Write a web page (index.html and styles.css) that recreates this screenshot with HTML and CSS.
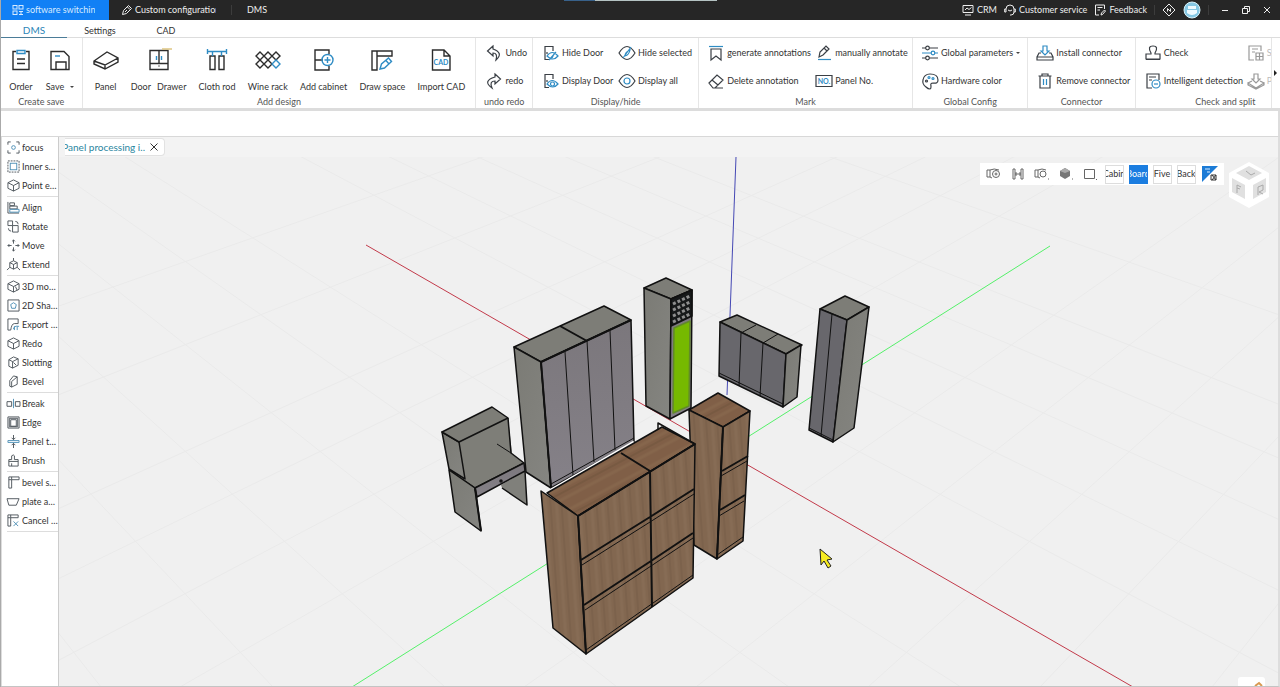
FILE: index.html
```html
<!DOCTYPE html>
<html lang="en">
<head>
<meta charset="utf-8">
<title>DMS</title>
<link rel="stylesheet" href="styles.css">
</head>
<body>
<div class="app">
<header class="titlebar">
  <div class="progress"></div>
  <button class="wtab wtab-active"><svg class="ic12" viewBox="0 0 12 12"><rect x="1" y="1.500" width="4" height="3.500"/><rect x="7" y="1.500" width="4" height="3.500"/><rect x="1" y="7" width="4" height="3.500"/><path d="M7 7.500h4M7 10.500h4M9 7v4"/></svg><span class="clip">software switching</span></button>
  <button class="wtab wtab-custom"><svg class="ic12" viewBox="0 0 12 12"><path d="M1.500 10.500l1-4 5-5 3 3-5 5zM6.500 3l2.500 2.500M4 8l2-2"/></svg><span class="clip">Custom configuration</span></button>
  <i class="tsep"></i>
  <button class="wtab wtab-dms">DMS</button>
  <div class="tools">
    <button><svg class="ic12" viewBox="0 0 12 12"><path d="M1 1.500h10v7H1zM3 11h6M3 6l2-2 2 1.500L9.500 3.500"/></svg>CRM</button>
    <button><svg class="ic12" viewBox="0 0 12 12"><path d="M2 8V5a4 4 0 0 1 8 0v3a3 3 0 0 1-3 3H6M2 5H.700v3H2M10 5h1.300v3H10M4 6q2 2 4 0"/></svg>Customer service</button>
    <button><svg class="ic12" viewBox="0 0 12 12"><path d="M10.500 5V1h-9v10H5M3.500 3.500h5M3.500 6H6M7 11l.500-2 3-3 1 1-3 3.500z"/></svg>Feedback</button>
    <i class="tsep"></i>
    <button aria-label="Assistant"><svg class="ic14" viewBox="0 0 14 14"><path d="M7 1l6 6-6 6-6-6zM5.500 8.500v-3l3 3v-3"/></svg></button>
    <button aria-label="Account"><svg class="avatar" viewBox="0 0 18 18"><circle cx="9" cy="9" r="8" fill="#86c8e4" stroke="#d9f2fa"/><path d="M5 5h8v3H5zM4 9h10v3q-5 4-10 0z" fill="#eefaff" stroke="none"/></svg></button>
    <i class="tsep"></i>
    <button class="win" aria-label="Minimize"><svg class="ic10" viewBox="0 0 10 10"><path d="M2 5.500h6"/></svg></button>
    <button class="win" aria-label="Restore"><svg class="ic10" viewBox="0 0 10 10"><path d="M1.500 3.500h5v5h-5zM3.500 3.500v-2h5v5h-2"/></svg></button>
    <button class="win" aria-label="Close"><svg class="ic10" viewBox="0 0 10 10"><path d="M2 2l6 6M8 2L2 8"/></svg></button>
  </div>
</header>
<nav class="menu">
  <button class="on">DMS</button><button>Settings</button><button>CAD</button>
</nav>
<section class="ribbon">
  <div class="group g-save">
    <div class="bigs">
      <button class="big"><svg viewBox="0 0 24 24"><path d="M7 3.500H4v18h16v-18h-3M8 11h8M8 15.500h8"/><path class="b" d="M8 2.500h8v3H8z"/></svg>Order</button>
      <button class="big"><svg viewBox="0 0 24 24"><path d="M3 3.500h13l5 5v13H3zM8 21v-7h10v7"/><path class="b" d="M7 8h5"/></svg><span>Save <i class="caret"></i></span></button>
    </div>
    <h2>Create save</h2>
  </div>
  <div class="group g-design">
    <div class="bigs">
      <button class="big"><svg class="wide" viewBox="0 0 26 24"><path d="M1 13L14 4l11 6v4l-13 7L1 16zM1 13l11 4 13-7M12 17v4"/></svg>Panel</button>
      <button class="big"><svg viewBox="0 0 24 24"><path d="M3 2.500h18v19H3zM12 3v13M3 15.500h18M12 17.500v1"/><path class="b" d="M9.500 8v4M14.500 8v4"/><path class="o" d="M15 1h10"/></svg><span class="two"><span>Door</span><span>Drawer</span></span></button>
      <button class="big"><svg viewBox="0 0 24 24"><path d="M5 8h5v13.500H5zM14 8h5v13.500h-5z"/><path class="b" d="M2.500 1v5M21.500 1v5M3 3.500h18M7.500 4v4M16.500 4v4"/></svg>Cloth rod</button>
      <button class="big"><svg class="wide" viewBox="0 0 26 24"><path d="M5 4l4 4-4 4-4-4zM13 4l4 4-4 4-4-4zM21 4l4 4-4 4-4-4zM5 12l4 4-4 4-4-4zM13 12l4 4-4 4-4-4z"/><path class="b" d="M21 12l4 4-4 4-4-4z"/></svg>Wine rack</button>
      <button class="big"><svg viewBox="0 0 24 24"><path d="M17 6V2H3v20h14v-4M3 12h8"/><circle class="b" cx="15.500" cy="12" r="5.500"/><path class="b" d="M12.500 12h6M15.500 9v6"/></svg>Add cabinet</button>
      <button class="big"><svg viewBox="0 0 24 24"><path d="M2 3h20v5H7v14H2zM7 3v5"/><path class="b" d="M10 21l1.500-5 7-6 3 3.500-7 6.500zM16 12.500l3 3.500"/></svg>Draw space</button>
      <button class="big"><svg viewBox="0 0 24 24"><path d="M3.500 2H15l6 6v14H3.500zM15 2v6h6"/><text x="12" y="17">CAD</text></svg>Import CAD</button>
    </div>
    <h2>Add design</h2>
  </div>
  <div class="group g-undo">
    <div class="smalls">
      <button class="small"><svg viewBox="0 0 18 18"><path d="M8 2L2.500 7 8 12V9q5 0 3 7 8-7-3-11z"/></svg>Undo</button>
      <button class="small"><svg viewBox="0 0 18 18"><path d="M10 2l5.500 5L10 12V9Q4 9 7 16-3 9 10 5z"/></svg>redo</button>
    </div>
    <h2>undo redo</h2>
  </div>
  <div class="group g-display">
    <div class="smalls">
      <button class="small"><svg viewBox="0 0 18 18"><path d="M7 15.500H3v-13h8V7M5 8v2"/><path class="b" d="M5 12q5-7 11 0-5 6-11 0zM7 16l7-8M10 14l2-4"/></svg>Hide Door</button>
      <button class="small"><svg viewBox="0 0 18 18"><path d="M7 15.500H3v-13h8V7M5 8v2"/><path class="b" d="M5 12q5-7 11 0-5 6-11 0z"/><circle class="b" cx="10.500" cy="12" r="2"/></svg>Display Door</button>
      <button class="small"><svg viewBox="0 0 18 18"><path d="M1 9q8-13 16 0-8 13-16 0z"/><path class="b" d="M5 14l8-11M7 12q4-1 5-6-5 2-5 6"/></svg>Hide selected</button>
      <button class="small"><svg viewBox="0 0 18 18"><path d="M1 9q8-13 16 0-8 13-16 0z"/><circle class="b" cx="9" cy="9" r="3"/></svg>Display all</button>
    </div>
    <h2>Display/hide</h2>
  </div>
  <div class="group g-mark">
    <div class="smalls">
      <button class="small"><svg viewBox="0 0 18 18"><path d="M4 5h10v11l-5-4-5 4z"/><path class="b" d="M2 2.500h14"/></svg>generate annotations</button>
      <button class="small"><svg viewBox="0 0 18 18"><path d="M2 11l8-8 6 5-8 8H6zM5 8l6 5M6 16h10"/></svg>Delete annotation</button>
      <button class="small"><svg viewBox="0 0 18 18"><path d="M4 13l1-5 6-6 3 3-6 6zM9 4l3 3"/><path class="b" d="M3 15.500h13"/></svg>manually annotate</button>
      <button class="small"><svg viewBox="0 0 18 18"><path d="M1 3.500h16v11H1z"/><text x="9" y="12">NO.</text></svg>Panel No.</button>
    </div>
    <h2>Mark</h2>
  </div>
  <div class="group g-global">
    <div class="smalls">
      <button class="small"><svg viewBox="0 0 18 18"><path d="M1 4h4M8 4h9M1 14h4M8 14h9"/><circle cx="6.500" cy="4" r="1.800"/><circle cx="6.500" cy="14" r="1.800"/><circle class="b" cx="12" cy="9" r="1.800"/><path class="b" d="M1 9h9M14 9h3"/></svg><span>Global parameters<i class="caret"></i></span></button>
      <button class="small"><svg viewBox="0 0 18 18"><path d="M9 17q-2 0-4-2-4-3-3-7 1-6 7-6 8 0 8 6 0 4-5 3-3 0-2 3 0 3-1 3z"/><circle cx="5.500" cy="9" r="1"/><circle class="b" cx="8" cy="5.500" r="1"/><circle class="b" cx="12" cy="6.500" r="1"/></svg>Hardware color</button>
    </div>
    <h2>Global Config</h2>
  </div>
  <div class="group g-conn">
    <div class="smalls">
      <button class="small"><svg viewBox="0 0 18 18"><path d="M5 9H3l-2 4v3h16v-3l-2-4h-2M1 13h16"/><path class="b" d="M7 2v5H5l4 4 4-4h-2V2z"/></svg>Install connector</button>
      <button class="small"><svg viewBox="0 0 18 18"><path d="M2.500 4h13M6 4V2h6v2M4 4v12h10V4"/><path class="b" d="M7.500 7v6M10.500 7v6"/></svg>Remove connector</button>
    </div>
    <h2>Connector</h2>
  </div>
  <div class="group g-check">
    <div class="smalls">
      <button class="small"><svg viewBox="0 0 18 18"><path d="M7 9Q3 2 9 2t2 7v1h5v5H2v-5h5zM2 15.500h14"/></svg>Check</button>
      <button class="small"><svg viewBox="0 0 18 18"><path d="M15 8V2H3v14h5M5 5h7M5 8h3"/><circle class="b" cx="12" cy="12" r="4"/><path class="b" d="M10 12h4"/></svg>Intelligent detection</button>
      <button class="small off" disabled><svg viewBox="0 0 18 18"><path d="M14 7V2H2v14h5M5 5h6M5 8h3M9 9h7v7H9zM12.500 9v7M9 12.500h7"/></svg>Split</button>
      <button class="small off" disabled><svg viewBox="0 0 18 18"><path d="M7 2h4v5h2l-4 4-4-4h2zM5 9l-4 2 8 5 8-5-4-2M1 11v2l8 4 8-4v-2"/></svg>Preview</button>
    </div>
    <h2>Check and split</h2>
  </div>
  <button class="more" aria-label="More tools"><svg viewBox="0 0 4 6"><path d="M1 0l3 3-3 3z"/></svg></button>
</section>
<div class="optionbar"></div>
<main class="work">
  <aside class="side">
    <div class="sgroup">
      <button><svg viewBox="0 0 14 14"><path d="M1 4V1h3M10 1h3v3M13 10v3h-3M4 13H1v-3"/><circle class="b" cx="7" cy="7" r="2"/></svg><span>focus</span></button>
      <button><svg viewBox="0 0 14 14"><rect x="1" y="1" width="12" height="12" stroke-dasharray="2 1"/><rect class="b" x="3.500" y="3.500" width="7" height="7"/></svg><span>Inner space</span></button>
      <button><svg viewBox="0 0 14 14"><path d="M7 1l6 3v6l-6 3-6-3V4zM1 4l6 3 6-3M7 7v6"/></svg><span>Point edit</span></button>
    </div>
    <div class="sgroup">
      <button><svg viewBox="0 0 14 14"><path d="M1 1v12M1 13h12M3 2h5v3H3zM3 5.500h8v3H3z"/><path class="b" d="M3 9h10v3H3z"/></svg><span>Align</span></button>
      <button><svg viewBox="0 0 14 14"><path d="M1 1h5v5H1zM6 6h6v7H6zM9 1.500q3 0 3 3M1.500 9q0 3 3 3"/></svg><span>Rotate</span></button>
      <button><svg viewBox="0 0 14 14"><path d="M7 5V1M5.500 2.500L7 1l1.500 1.500M7 9v4M5.500 11.500L7 13l1.500-1.500M5 7H1M2.500 5.500L1 7l1.500 1.500M9 7h4M11.500 5.500L13 7l-1.500 1.500"/></svg><span>Move</span></button>
      <button><svg viewBox="0 0 14 14"><path d="M7 3l4 2v5l-4 2-4-2V5zM3 5l4 2 4-2M7 7v5M7 3V0M3 10l-3 3M11 10l3 3"/></svg><span>Extend</span></button>
    </div>
    <div class="sgroup">
      <button><svg viewBox="0 0 14 14"><path d="M7 1l6 3v6l-6 3-6-3V4zM1 4l6 3 6-3M7 7v6M9 7l2 4"/></svg><span>3D model</span></button>
      <button><svg viewBox="0 0 14 14"><path d="M1 1h12v12H1z"/><path class="b" d="M7 4l3 2-1 4H5L4 6z"/></svg><span>2D Shape</span></button>
      <button><svg viewBox="0 0 14 14"><path d="M4 13H1V1h11v5H8q-3 0-4 7"/><path class="b" d="M7 12q0-4 6-3M8 9v4M11 9v4"/></svg><span>Export file</span></button>
      <button><svg viewBox="0 0 14 14"><path d="M7 1l6 3v6l-6 3-6-3V4zM1 4l6 3 6-3M7 7v6"/></svg><span>Redo</span></button>
      <button><svg viewBox="0 0 14 14"><path d="M2 4l5-3 5 2v7l-6 3-4-2zM2 4l4 2v7M6 6l6-3M7 7l3 3"/></svg><span>Slotting</span></button>
      <button><svg viewBox="0 0 14 14"><path d="M3 6l4-5 4 1v8l-6 3-2-1zM5 7v6M5 7l6-5"/></svg><span>Bevel</span></button>
    </div>
    <div class="sgroup">
      <button><svg viewBox="0 0 14 14"><path d="M0 5h5v5H0zM9 5h5v5H9z"/><path class="b" d="M7 2v10"/></svg><span>Break</span></button>
      <button><svg viewBox="0 0 14 14"><path d="M1 1h12v12H1zM2.500 2.500h9v9h-9zM4 4h6v7H4z"/></svg><span>Edge</span></button>
      <button><svg viewBox="0 0 14 14"><path d="M7 0v5M5 3l2 2 2-2M7 14V9M5 11l2-2 2 2"/><path class="b" d="M1 6h12v2H1z"/></svg><span>Panel tool</span></button>
      <button><svg viewBox="0 0 14 14"><path d="M5 6V2q2-2 3 0v4h4v7H2V6zM2 8h10M5 10v3"/></svg><span>Brush</span></button>
    </div>
    <div class="sgroup">
      <button><svg viewBox="0 0 14 14"><path d="M2 1h11v3H5v9H2zM2 4h3M5 1v3"/></svg><span>bevel side</span></button>
      <button><svg viewBox="0 0 14 14"><path d="M0 4h13l-3 7H2z"/></svg><span>plate angle</span></button>
      <button><svg viewBox="0 0 14 14"><path d="M1 1h11v3H4v9H1zM1 4h3M4 1v3"/><path class="b" d="M7 8l5 5M12 8l-5 5"/></svg><span>Cancel cut</span></button>
    </div>
  </aside>
  <div class="doc">
    <div class="doctabs"><div class="doctab"><span class="doctitle"><span>Panel processing i..</span></span><button aria-label="Close tab"><svg class="ic10" viewBox="0 0 10 10"><path d="M1.500 1.500l7 7M8.500 1.500l-7 7"/></svg></button></div></div>
    <div class="view">
      <svg class="scene" viewBox="59 157 1219 529" preserveAspectRatio="xMidYMid slice" role="img" aria-label="Cabinet layout">
        <defs>
          <pattern id="wood" width="23" height="2000" patternUnits="userSpaceOnUse" patternTransform="rotate(-4)"><rect width="23" height="2000" fill="#826750" stroke="none"/><path d="M3 0v2000M14 0v2000" stroke="#876c55" stroke-width="3"/><path d="M8 0v2000M19 0v2000" stroke="#7c624c" stroke-width="2"/></pattern>
          <pattern id="woodtop" width="23" height="2000" patternUnits="userSpaceOnUse" patternTransform="rotate(62) translate(0 -1000)"><rect width="23" height="2000" fill="#805f47" stroke="none"/><path d="M4 0v2000M15 0v2000" stroke="#86664c" stroke-width="3"/><path d="M9 0v2000" stroke="#785a42" stroke-width="2"/></pattern>
          <linearGradient id="gside" x2="1" y2="1"><stop stop-color="#7b7b75"/><stop offset="1" stop-color="#858581"/></linearGradient>
          <linearGradient id="gfront" x2="0" y2="1"><stop stop-color="#7b777c"/><stop offset="1" stop-color="#858188"/></linearGradient>
        </defs>
        <path class="grid" d="M-753-400L-415 687M-753-400L-243 687M-753-400L-71 687M-753-400L101 687M-753-400L273 687M-753-400L445 687M-753-400L617 687M-753-400L789 687M-753-400L961 687M-753-400L1305 687M-753-400L1477 687M-753-400L1649 687M-753-400L1821 687M-753-400L1993 687M-753-400L2337 687M2080-405L-1024 687M2080-405L-680 687M2080-405L-336 687M2080-405L-164 687M2080-405L8 687M2080-405L180 687M2080-405L524 687M2080-405L696 687M2080-405L868 687M2080-405L1040 687M2080-405L1212 687M2080-405L1384 687M2080-405L1556 687"/>
        <path d="M366 245L1133 687" stroke="#c23a4a"/><path d="M352 687L1050 246" stroke="#55f06a"/><path d="M736 157L727 395" stroke="#4548b4"/>
        <g class="solid">
          <path class="top" d="M644 288l22-10 26 12-21 9z"/><path class="sd" d="M644 288l27 11-1 120-24-13z"/><path class="fr" d="M671 299l21-9-1 118-21 11z"/>
          <path d="M671 299l21-9v26l-21 10z" fill="#17191a"/>
          <path d="M673 304l17-8M673 310l17-8M673 316l17-8M673 322l17-8" stroke="#8f8f8f" stroke-width="3" stroke-dasharray="3 2"/>
          <path d="M674 328l16-7-1 85-16 7z" fill="#76b900" stroke="#628a29"/>
        </g>
        <g class="solid">
          <path class="top" d="M720 322l17-7 65 30-16 9z"/><path class="dark" d="M720 322l66 32-3 53-64-31z"/><path class="sd" d="M786 354l15-9-4 52-14 10z"/><path d="M741 333l-2 53M763 343l-3 53M741 333l15-8M763 343l15-9M719 373l64 31" class="thin"/>
        </g>
        <g class="solid">
          <path class="top" d="M820 309l25-13 24 11-22 13z"/><path class="dark" d="M820 309l27 11-14 122-24-12z"/><path class="sd" d="M847 320l22-13-15 121-21 14z"/><path class="thin" d="M832 314l-11 122M809 428l24 12"/>
        </g>
        <g class="solid">
          <path class="top" d="M514 347l90-41 27 14-90 42z"/><path class="sd" d="M514 347l27 15 10 126-25-16z"/><path class="fr" d="M541 362l90-42 3 122-83 46z"/><path d="M560 326l27 15M541 362l90-42M541 362l10 126" stroke-width="2"/><path class="thin" d="M565 352l8 123M587 341l7 121M610 331l5 119M551 484l83-46"/>
        </g>
        <g class="solid">
          <path fill="#80807b" d="M501 485l24-14 2 34-25-17z" stroke="none"/><path fill="none" d="M525 471l2 34-25-17"/>
          <path fill="#7e7e78" stroke="none" d="M459 442l49-25 4 37 12 9-49 25-26-18 16 10z"/>
          <path class="sd" d="M442 432l17 10 6 37-16-10z"/>
          <path class="top" d="M442 432l50-25 16 11-49 24z"/>
          <path fill="none" d="M508 418l3 35 13 10-49 25-26-18"/><path class="thin" d="M497 444l14 9"/>
          <path class="sd" d="M449 470l26 18 6 43-26-19z"/><path class="fr" d="M475 488l49-25 1 8-48 26z"/><path d="M475 488l6 43" stroke-width="2"/><circle cx="501" cy="481" r="1"/>
        </g>
        <g class="solid">
          <path fill="url(#woodtop)" d="M689 410l29-17 32 18-27 16z"/><path fill="url(#wood)" d="M689 410l34 17-6 132-23-14z"/><path fill="url(#wood)" d="M723 427l27-16-7 130-26 18z"/><path d="M722 471l26-15M720 510l25-15M723 427l-6 132" stroke-width="2"/><path class="thin" d="M721 476l26-15M719 516l25-15M717 555l26-18"/>
        </g>
        <path d="M551 490l83-48" stroke="#fff" stroke-width="3"/>
        <g class="solid">
          <path fill="url(#woodtop)" d="M547 493l115-66 33 17-117 72z"/><path d="M658 430v-7l37 21" fill="none"/><path fill="url(#wood)" d="M541 491l37 25 8 138-33-26z"/><path fill="url(#wood)" d="M578 516l117-72-2 134-107 76z"/>
          <path d="M621 453l29 18 2 136M578 516l8 138M578 516l117-72M581 560l69-43 44-28M584 605l67-44 42-28" fill="none" stroke-width="2"/><path class="thin" d="M582 565l68-43 44-28M585 610l66-44 42-28M586 650l107-75" fill="none"/>
        </g>
        <path d="M820 549l1 16 3-4 4 7 3-2-4-6 5-1z" fill="#f7ec22" stroke="#222"/>
      </svg>
      <div class="viewbar">
        <button aria-label="Camera"><svg viewBox="0 0 16 16"><path d="M1 4h3v7H1zM4 4q4-2 9 0M4 11l2 1"/><circle cx="10" cy="8" r="3.500"/><circle cx="10" cy="8" r="1"/></svg></button>
        <button aria-label="Measure"><svg viewBox="0 0 16 16"><path d="M3 3h2v10H3zM11 3h2v10h-2zM5 8h6M6 6v4M10 6v4"/></svg></button>
        <button aria-label="Camera settings"><svg viewBox="0 0 16 16"><path d="M1 4h3v7H1zM4 4q4-2 8 0M4 11l2 1"/><circle cx="9" cy="8" r="3"/><path d="M14 13h1"/></svg></button>
        <button aria-label="Shading"><svg viewBox="0 0 16 16"><path d="M7 2l5 3v5l-5 3-5-3V5z" fill="#777" stroke="none"/><path d="M2 5l5-3 5 3-5 2z" fill="#aaa" stroke="none"/><path d="M14 13h1"/></svg></button>
        <button aria-label="Select box"><svg viewBox="0 0 16 16"><path d="M2.500 3.500h10v9h-10zM14 13.500h1"/></svg></button>
        <button><span class="chip">Cabin</span></button>
        <button><span class="chip chip-on">Board</span></button>
        <button><span class="chip">Five</span></button>
        <button><span class="chip">Back</span></button>
        <button aria-label="Front or back"><svg class="swap" viewBox="0 0 16 16"><path d="M0 0h16L0 16z" fill="#1b7bd6" stroke="none"/><path d="M3 3h5M5 6h3" stroke="#d8ecff"/><path d="M9 9h5v5H9zM10 9l4 5M14 9l-4 5" stroke="#333"/></svg></button>
      </div>
      <svg class="cube" viewBox="0 0 42 48"><path d="M21 1l20 11v24L21 47 1 36V12z" fill="#fff"/><path d="M21 5l13 7-13 7-13-7zM4 17l13 7v14L4 31zM38 17l-13 7v14l13-7z" fill="#e0e0e0"/><path d="M18 10l5 4 4-2M9 32v-8l4 2M9 27l3 1M30 34v-8l5-2v5l-4 2 4 2" fill="none" stroke="#aaa"/></svg>
      <button class="corner" aria-label="Tips"><svg viewBox="0 0 14 10"><path d="M4 9l4-3 3 3" fill="none" stroke="#d99a52" stroke-width="2"/></svg></button>
    </div>
  </div>
</main>
</div>
</body>
</html>
```

FILE: styles.css
```css
* { box-sizing: border-box; }
body { margin: 0; font: 9px/12px Lato, "Noto Sans", sans-serif; color: #333; background: #fff; }
button { border: 0; margin: 0; padding: 0; background: none; font: inherit; color: inherit; white-space: nowrap; }
svg { flex: none; fill: none; stroke: currentColor; }
.app { display: flex; flex-direction: column; height: 100vh; min-height: 560px; overflow: hidden; border-left: 1px solid #aaa; }

.titlebar { position: relative; flex: none; display: flex; align-items: center; height: 20px; background: #262626; color: #eee; }
.progress { position: absolute; top: 0; left: 44%; width: 12%; height: 1px; background: linear-gradient(90deg, #38618a 20%, #b4c2c2 20%); }
.wtab { display: flex; align-items: center; gap: 2px; height: 20px; }
.wtab-active { width: 108px; padding-left: 11px; background: #1180f5; color: #d6eaff; }
.wtab-active .clip { width: 69px; }
.wtab-custom { width: 122px; padding-left: 12px; }
.wtab-custom .clip { width: 81px; }
.wtab-dms { padding-left: 15px; }
.clip { overflow: hidden; text-align: left; }
.tsep { width: 1px; height: 10px; background: #3c3c3c; }
.ic12 { width: 12px; height: 12px; }
.ic14 { width: 14px; height: 14px; }
.ic10 { width: 10px; height: 10px; }
.avatar { width: 18px; height: 18px; }
.tools { display: flex; align-items: center; gap: 7px; margin-left: auto; padding-right: 8px; }
.tools button { display: flex; align-items: center; gap: 3px; }
.tools .win { padding-left: 4px; }

.menu { flex: none; display: flex; height: 18px; border-bottom: 1px solid #ddd; }
.menu button { width: 66px; height: 18px; padding-top: 3px; }
.menu .on { color: #2e86b8; font-size: 10px; border-bottom: 1px solid #4b7c98; }

.ribbon { flex: none; display: flex; height: 73px; border-bottom: 3px solid #dcdcdc; padding-right: 2px; }
.group { display: flex; flex-direction: column; min-width: 0; padding-top: 1px; overflow: hidden; border-right: 1px solid #e6e6e6; }
.g-save { flex: 81 1 0; }
.g-design { flex: 395 1 0; }
.g-undo { flex: 56 1 0; }
.g-display { flex: 166 1 0; }
.g-mark { flex: 214 1 0; }
.g-global { flex: 115 1 0; }
.g-conn { flex: 107 1 0; }
.g-check { flex: 136 1 0; }
.group h2 { margin: 0; font-size: 9px; line-height: 13px; font-weight: 400; color: #555; text-align: center; white-space: nowrap; }
.g-check h2 { padding-left: 44px; }
.bigs { flex: 1; display: flex; justify-content: space-between; padding: 9px 10px 2px; }
.g-save .bigs { padding: 9px 8px 2px; }
.big { display: flex; flex-direction: column; align-items: center; justify-content: space-between; }
.big svg { width: 24px; height: 24px; overflow: visible; stroke: #2c2c2c; stroke-width: 1.4; }
.big .wide { width: 26px; }
.two { display: flex; gap: 6px; }
svg .b { stroke: #2f8cc4; }
svg .o { stroke: #dcc27a; }
svg text { fill: #2f8cc4; stroke: none; font-size: 7px; font-weight: 700; text-anchor: middle; }
.caret { display: inline-block; margin: 0 0 2px 3px; border: 2px solid transparent; border-top-color: #444; border-bottom: 0; }
.smalls { flex: 1; display: grid; grid-auto-flow: column; grid-template-rows: 1fr 1fr; justify-content: start; padding-left: 9px; }
.g-display .smalls { grid-template-columns: 76px auto; }
.g-mark .smalls { grid-template-columns: 108px auto; padding-left: 8px; }
.g-check .smalls { grid-template-columns: 103px auto; padding-left: 8px; }
.g-global .smalls, .g-conn .smalls { padding-left: 8px; }
.small { display: flex; align-items: center; gap: 2px; }
.small svg { width: 18px; height: 18px; stroke: #3a3f45; stroke-width: 1.2; }
.off { color: #bbb; }
.off svg { stroke: #999; }
.more { width: 6px; }
.more svg { width: 4px; height: 6px; fill: #222; stroke: none; }
.optionbar { flex: none; height: 26px; border-bottom: 1px solid #d8d8d8; border-right: 2px solid #ddd; }

.work { flex: 1; min-height: 0; display: flex; border-right: 2px solid #ddd; border-bottom: 1px solid #c4c4c4; }
.side { flex: none; width: 58px; padding-left: 5px; border-left: 1px solid #ddd; border-right: 1px solid #ccc; overflow: hidden; }
.sgroup { padding: 1px 0; border-bottom: 1px solid #ddd; }
.side button { display: flex; align-items: center; gap: 2px; width: 100%; height: 19px; }
.side svg { width: 13px; height: 13px; stroke: #4c535a; overflow: visible; }
.side svg .b { stroke: #4d8fb5; }
.side span { flex: 1; min-width: 0; text-align: left; overflow: hidden; text-overflow: ellipsis; }
.doc { flex: 1; min-width: 0; display: flex; flex-direction: column; background: #f0f0f0; }
.doctabs { flex: none; display: flex; height: 20px; padding: 1px 6px; background: #f3f3f3; }
.doctab { display: flex; align-items: center; gap: 4px; padding-right: 5px; background: #fff; border: 1px solid #e2e2e2; border-left: 0; border-radius: 0 4px 4px 0; }
.doctitle { display: flex; justify-content: flex-end; width: 80px; overflow: hidden; white-space: nowrap; font-size: 10px; color: #2a86a0; }
.doctab button { display: flex; }
.view { position: relative; flex: 1; min-height: 0; overflow: hidden; }
.scene { display: block; width: 100%; height: 100%; }
.grid { stroke: #eaeaea; }
.solid { stroke: #111; stroke-width: 1.5; stroke-linejoin: round; }
.solid .thin { stroke-width: 1; }
.top { fill: #7d7d77; }
.sd { fill: url(#gside); }
.fr { fill: url(#gfront); }
.dark { fill: #68676c; }
.viewbar { position: absolute; top: 6px; right: 54px; display: flex; height: 22px; padding: 0 2px; background: #fff; }
.viewbar button { display: flex; align-items: center; justify-content: center; width: 24px; }
.viewbar svg { width: 16px; height: 16px; stroke: #666; }
.chip { display: flex; align-items: center; justify-content: center; width: 19px; height: 19px; overflow: hidden; border: 1px solid #ddd; }
.chip-on { background: #1b7de0; border-color: #1b7de0; color: #fff; }
.cube { position: absolute; top: 4px; right: 8px; width: 42px; height: 48px; stroke: none; }
.corner { position: absolute; right: 13px; bottom: 0; width: 27px; height: 9px; background: #fff; border-radius: 3px 3px 0 0; overflow: hidden; }
.corner svg { width: 14px; height: 10px; float: right; }
```
